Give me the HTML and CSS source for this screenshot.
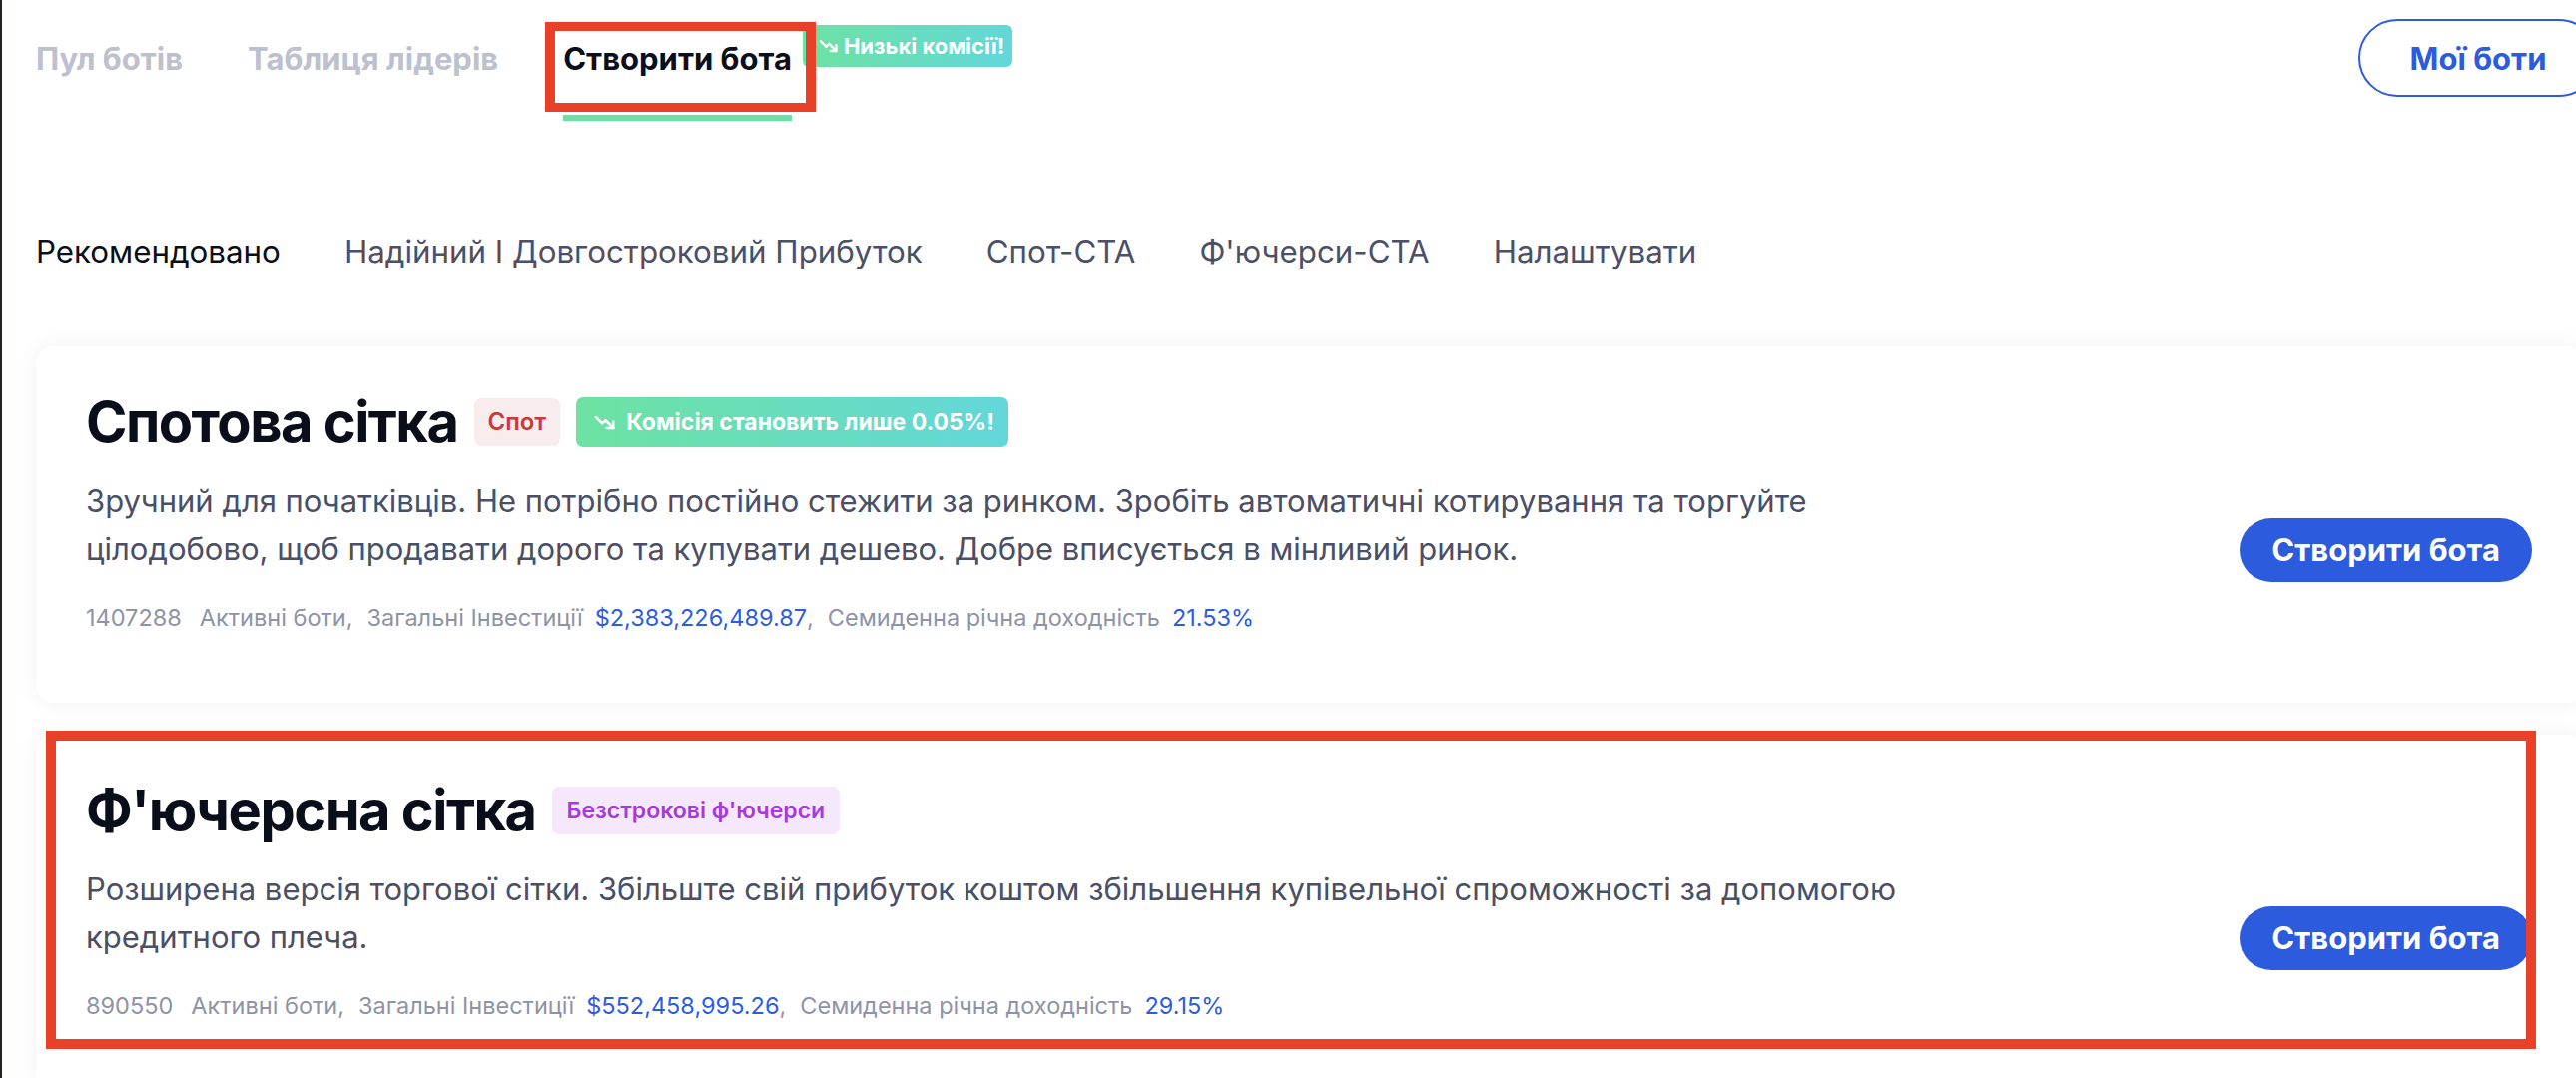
FILE: index.html
```html
<!DOCTYPE html>
<html lang="uk">
<head>
<meta charset="utf-8">
<title>Створити бота</title>
<link rel="stylesheet" href="styles.css">
</head>
<body>
<div class="page">
  <header class="topbar">
    <nav class="main-tabs">
      <a class="main-tab">Пул ботів</a>
      <a class="main-tab">Таблиця лідерів</a>
      <a class="main-tab active">Створити бота<span class="promo-badge"><svg class="ico" viewBox="0 0 24 16" width="20" height="14"><polyline points="2,2 9,9 12.5,5.5 21,14" fill="none" stroke="#fff" stroke-width="2.8" stroke-linecap="round" stroke-linejoin="round"/><polyline points="14,14 21,14 21,7" fill="none" stroke="#fff" stroke-width="2.8" stroke-linecap="round" stroke-linejoin="round"/></svg>Низькі комісії!</span></a>
    </nav>
    <button class="my-bots">Мої боти</button>
  </header>

  <nav class="sub-tabs">
    <a class="sub-tab active">Рекомендовано</a>
    <a class="sub-tab">Надійний І Довгостроковий Прибуток</a>
    <a class="sub-tab">Спот-СТА</a>
    <a class="sub-tab">Ф'ючерси-СТА</a>
    <a class="sub-tab">Налаштувати</a>
  </nav>

  <section class="cards">
    <article class="card">
      <div class="card-body">
        <div class="card-head">
          <h2 class="card-title">Спотова сітка</h2>
          <span class="tag tag-spot">Спот</span>
          <span class="tag tag-promo"><svg class="ico" viewBox="0 0 24 16" width="22" height="15"><polyline points="2,2 9,9 12.5,5.5 21,14" fill="none" stroke="#fff" stroke-width="2.8" stroke-linecap="round" stroke-linejoin="round"/><polyline points="14,14 21,14 21,7" fill="none" stroke="#fff" stroke-width="2.8" stroke-linecap="round" stroke-linejoin="round"/></svg>Комісія становить лише 0.05%!</span>
        </div>
        <p class="desc">Зручний для початківців. Не потрібно постійно стежити за ринком. Зробіть автоматичні котирування та торгуйте цілодобово, щоб продавати дорого та купувати дешево. Добре вписується в мінливий ринок.</p>
        <div class="stats">
          <span class="stat-num">1407288</span>
          <span class="stat-label">Активні боти</span><span class="sep">,</span>
          <span class="stat-label">Загальні Інвестиції</span>
          <span class="stat-value">$2,383,226,489.87</span><span class="sep">,</span>
          <span class="stat-label">Семиденна річна доходність</span>
          <span class="stat-value">21.53%</span>
        </div>
      </div>
      <button class="create">Створити бота</button>
    </article>

    <article class="card">
      <div class="card-body">
        <div class="card-head">
          <h2 class="card-title">Ф'ючерсна сітка</h2>
          <span class="tag tag-perp">Безстрокові ф'ючерси</span>
        </div>
        <p class="desc">Розширена версія торгової сітки. Збільште свій прибуток коштом збільшення купівельної спроможності за допомогою кредитного плеча.</p>
        <div class="stats">
          <span class="stat-num">890550</span>
          <span class="stat-label">Активні боти</span><span class="sep">,</span>
          <span class="stat-label">Загальні Інвестиції</span>
          <span class="stat-value">$552,458,995.26</span><span class="sep">,</span>
          <span class="stat-label">Семиденна річна доходність</span>
          <span class="stat-value">29.15%</span>
        </div>
      </div>
      <button class="create">Створити бота</button>
    </article>
  </section>

  <div class="mark mark-tab"></div>
  <div class="mark mark-card"></div>
</div>
</body>
</html>
```

FILE: styles.css
```css
html, body {
  margin: 0;
  background: #ffffff;
  overflow: hidden;
}

body {
  border-left: 2px solid #1d2818;
  font-family: Inter, "Noto Sans", "Liberation Sans", sans-serif;
  color: #0b0e1a;
}

.page {
  position: relative;
  width: 2620px;
  box-sizing: border-box;
  padding: 0 34px 0 34px;
}

/* ---------- top bar ---------- */
.topbar {
  display: flex;
  justify-content: space-between;
  align-items: flex-start;
}

.main-tabs {
  display: flex;
  gap: 65px;
}

.main-tab {
  position: relative;
  display: block;
  font-size: 31px;
  font-weight: 700;
  line-height: 40px;
  padding: 39px 0 36px;
  border-bottom: 6px solid transparent;
  color: #bcc0cf;
  white-space: nowrap;
}

.main-tab.active {
  color: #0c0e1b;
  border-bottom-color: #6be0a5;
}

.promo-badge {
  position: absolute;
  left: calc(100% + 11px);
  top: 25px;
  height: 42px;
  display: flex;
  align-items: center;
  gap: 5px;
  padding: 0 8px 0 16px;
  border-radius: 6px;
  background: linear-gradient(90deg, #6de2a2 0%, #63d7d9 100%);
  color: #ffffff;
  font-size: 22px;
  font-weight: 700;
  line-height: 1;
}

.ico {
  flex: none;
  display: block;
}

.my-bots {
  margin-top: 19px;
  margin-right: -14px;
  width: 240px;
  height: 78px;
  border: 2px solid #2d5bdd;
  border-radius: 40px;
  background: #ffffff;
  color: #2d5bdd;
  font-family: inherit;
  font-size: 31px;
  font-weight: 700;
}

/* ---------- sub tabs ---------- */
.sub-tabs {
  display: flex;
  gap: 64px;
  margin-top: 111px;
  font-size: 31.3px;
  line-height: 40px;
  color: #4b5066;
}

.sub-tab.active {
  color: #0b0d17;
}

/* ---------- cards ---------- */
.cards {
  margin-top: 75px;
  display: flex;
  flex-direction: column;
  gap: 32px;
}

.card {
  display: flex;
  justify-content: space-between;
  background: #ffffff;
  border-radius: 18px;
  box-shadow: 0 0 22px rgba(30, 40, 80, 0.06);
  padding: 41px 52px 69px 50px;
}

.card-head {
  display: flex;
  align-items: center;
  gap: 16px;
}

.card-title {
  margin: 0;
  font-size: 56px;
  line-height: 70px;
  font-weight: 700;
  letter-spacing: -1.5px;
  color: #0a0d1a;
  white-space: nowrap;
}

.tag {
  display: flex;
  align-items: center;
  border-radius: 7px;
  font-weight: 600;
  line-height: 1;
  white-space: nowrap;
}

.tag-spot {
  height: 48px;
  padding: 0 14px;
  background: #f9ecec;
  color: #c53b3b;
  font-size: 24px;
}

.tag-promo {
  height: 50px;
  gap: 10px;
  padding: 0 14px 0 18px;
  background: linear-gradient(90deg, #6de2a2 0%, #63d7d9 100%);
  color: #ffffff;
  font-size: 23px;
  font-weight: 700;
}

.tag-perp {
  height: 48px;
  padding: 0 15px;
  background: #f6e8fc;
  color: #a63bd9;
  font-size: 23px;
}

.desc {
  margin: 20px 0 0;
  max-width: 1860px;
  font-size: 31px;
  line-height: 48px;
  color: #4a4f66;
}

.stats {
  display: flex;
  align-items: baseline;
  margin-top: 29px;
  font-size: 23.5px;
  line-height: 32px;
  color: #8e93a7;
  white-space: nowrap;
}

.stat-num {
  margin-right: 18px;
}

.stat-label {
  margin-right: 12px;
}

.stat-value {
  color: #2c5ce0;
}

.sep {
  margin-left: -12px;
  margin-right: 14px;
}

.stat-value + .sep {
  margin-left: 0;
}

.create {
  flex: none;
  align-self: center;
  margin-top: 78px;
  height: 64px;
  padding: 0 32px;
  border: none;
  border-radius: 32px;
  background: #2d5bdd;
  color: #ffffff;
  font-family: inherit;
  font-size: 31px;
  font-weight: 700;
}

/* ---------- screenshot annotations ---------- */
.mark {
  position: absolute;
  box-sizing: border-box;
  border: 10px solid #e9402a;
  pointer-events: none;
}

.mark-tab {
  left: 544px;
  top: 22px;
  width: 271px;
  height: 90px;
  border-width: 9px 10px;
}

.mark-card {
  left: 44px;
  top: 732px;
  width: 2494px;
  height: 319px;
}
```
